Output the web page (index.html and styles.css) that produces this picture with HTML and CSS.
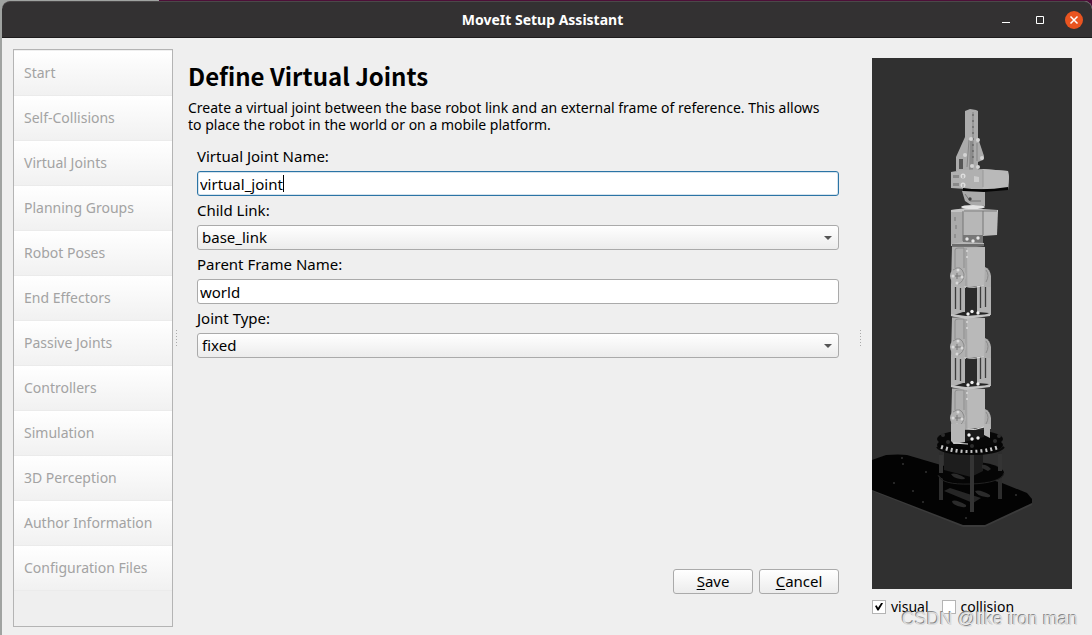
FILE: index.html
```
<!DOCTYPE html>
<html lang="en">
<head>
<meta charset="utf-8">
<title>MoveIt Setup Assistant</title>
<link rel="stylesheet" href="styles.css">
</head>
<body>
<div class="window">
	<header class="titlebar">
		<h1 class="titlebar-text">MoveIt Setup Assistant</h1>
		<div class="titlebar-buttons">
			<button type="button" class="winbtn" aria-label="Minimize">
				<svg width="18" height="18" viewBox="0 0 18 18"><path d="M5 11.5h8" stroke="#fff"/></svg>
			</button>
			<button type="button" class="winbtn" aria-label="Maximize">
				<svg width="18" height="18" viewBox="0 0 18 18"><path d="M5.5 5.5h7v7h-7z" fill="none" stroke="#fff"/></svg>
			</button>
			<button type="button" class="winbtn" aria-label="Close">
				<svg width="18" height="18" viewBox="0 0 18 18"><circle cx="9" cy="9" r="9" fill="#e95420"/><path d="M5.5 5.5l7 7M12.5 5.5l-7 7" stroke="#fff" stroke-width="1.5"/></svg>
			</button>
		</div>
	</header>
	<div class="content">
		<nav class="steps">
			<button type="button" class="step" disabled>Start</button>
			<button type="button" class="step" disabled>Self-Collisions</button>
			<button type="button" class="step" disabled>Virtual Joints</button>
			<button type="button" class="step" disabled>Planning Groups</button>
			<button type="button" class="step" disabled>Robot Poses</button>
			<button type="button" class="step" disabled>End Effectors</button>
			<button type="button" class="step" disabled>Passive Joints</button>
			<button type="button" class="step" disabled>Controllers</button>
			<button type="button" class="step" disabled>Simulation</button>
			<button type="button" class="step" disabled>3D Perception</button>
			<button type="button" class="step" disabled>Author Information</button>
			<button type="button" class="step" disabled>Configuration Files</button>
		</nav>
		<div class="splitter"></div>
		<main class="page">
			<h2 class="page-title">Define Virtual Joints</h2>
			<p class="page-desc">Create a virtual joint between the base robot link and an external frame of reference. This allows to place the robot in the world or on a mobile platform.</p>
			<form class="form">
				<label class="label" for="joint-name">Virtual Joint Name:</label>
				<div class="field field-active">
					<input class="input" id="joint-name" type="text" value="virtual_joint">
				</div>
				<label class="label" for="child-link">Child Link:</label>
				<div class="field field-select">
					<select class="select" id="child-link"><option>base_link</option></select>
				</div>
				<label class="label" for="parent-frame">Parent Frame Name:</label>
				<div class="field">
					<input class="input" id="parent-frame" type="text" value="world">
				</div>
				<label class="label" for="joint-type">Joint Type:</label>
				<div class="field field-select">
					<select class="select" id="joint-type"><option>fixed</option></select>
				</div>
				<div class="actions">
					<button type="button" class="button"><u>S</u>ave</button>
					<button type="button" class="button"><u>C</u>ancel</button>
				</div>
			</form>
		</main>
		<div class="splitter"></div>
		<aside class="viewer">
			<div class="scene">
				<svg class="robot" viewBox="872 58 200 531" role="img" aria-label="Robot model">
					<defs>
						<!-- servo body with hinge, shared by the three arm segments -->
						<g id="servo">
							<path d="M952 246l16-1 17 2v38l-17 2-5-1h-12z" fill="#b0b0b0"/>
							<path d="M967 248l18-1v38l-17 2z" fill="#b9b9b9"/>
							<path d="M966 248v38" stroke="#9a9a9a"/>
							<path d="M955 268v-18q0-2 3-2h6v20" fill="none" stroke="#8c8c8c"/>
							<path d="M952 246h32" stroke="#3a3a3a"/>
							<path d="M985 267q5 2 6 9v11h-7z" fill="#adadad"/>
							<path d="M986 270q4 5 0 12" fill="none" stroke="#8a8a8a"/>
							<circle cx="958" cy="276" r="8" fill="#b2b2b2"/>
							<path d="M953 270q8-6 11 4q0 8-6 10" fill="none" stroke="#8a8a8a"/>
							<path d="M957 273v6M955 276h6" stroke="#777"/>
							<g fill="#dadada"><circle cx="958" cy="270" r="1.5"/><circle cx="953" cy="276" r="1.5"/><circle cx="962" cy="277" r="1.5"/><circle cx="957" cy="283" r="1.5"/><circle cx="967" cy="251" r="1"/><circle cx="967" cy="257" r="1"/></g>
						</g>
						<!-- slotted bracket below a servo -->
						<g id="bracket">
							<path d="M951 284h15v30l-10 3-5-1zM977 286l14-3v32l-14 1z" fill="#b2b2b2"/>
							<path d="M965 288h12v25h-12z" fill="#2b2b2b"/>
							<path d="M955.500 287v22M960.500 288v22M980.500 286v22M985.500 284v23" stroke="#3c3c3c" stroke-width="1.3"/>
							<path d="M964 286q10 3 20 -1" fill="none" stroke="#dedede"/>
							<path d="M963 312h15l11 1-4 2-23 1-8-1z" fill="#242424"/>
							<path d="M951 316l15 3 24-3v-2l-24 2-15-2z" fill="#c4c4c4"/>
							<g fill="#f2f2f2"><circle cx="968" cy="314" r="1.700"/><circle cx="972" cy="311.500" r="1.700"/><circle cx="978" cy="313" r="1.700"/></g>
						</g>
					</defs>
					<!-- base plate -->
					<path d="M872 461l14-6 21 1 121 39 4 5v5l-47 22h-22l-91-36z" fill="#3b3b3b"/>
					<path d="M872 460l14-5q13-1 21 0l95 28 25 10 5 6v4l-47 22h-22l-91-35z" fill="#030303"/>
					<g fill="#333"><circle cx="902" cy="458" r="1"/><circle cx="903" cy="464" r="1"/><circle cx="926" cy="472" r="1"/><circle cx="894" cy="483" r="1"/><circle cx="913" cy="491" r="1"/><circle cx="923" cy="502" r="1"/><circle cx="966" cy="518" r="1"/><circle cx="1016" cy="495" r="1"/></g>
					<path d="M944 491l6-3 31 10-8 5z" fill="#262626"/>
					<path d="M952 501q4-2 14 4 1 3-4 2-10-2-10-6zM975 491q5-2 15 4 1 3-4 2-9-1-11-6z" fill="#2b2b2b"/>
					<!-- deck and posts -->
					<path d="M939 452h4v48h-4zM998 451h4v48h-4z" fill="#2d2d2d"/>
					<ellipse cx="971" cy="473" rx="33" ry="11" fill="#050505"/>
					<path d="M944 452h39v19l-12 6-27-7z" fill="#1d1d1d"/>
					<path d="M951 474q5-2 14 4 0 2-5 1-7-1-9-5zM982 465q4-1 9 4l-3 2-6-3z" fill="#2b2b2b"/>
					<path d="M938 475q3 10 33 9t33-11" fill="none" stroke="#222"/>
					<path d="M970 452h4v60h-4zM939 455h4v18h-4zM998 454h4v17h-4z" fill="#343434"/>
					<!-- bearing -->
					<ellipse cx="970" cy="445" rx="33" ry="9" fill="#050505"/>
					<path d="M941 447q29 10 58 0" fill="none" stroke="#c4c4c4" stroke-width="4" stroke-dasharray="2 3"/>
					<path d="M937 447q5 7 33 7t34-7" fill="none" stroke="#080808" stroke-width="2"/>
					<ellipse cx="970" cy="439" rx="33" ry="9" fill="#070707"/>
					<g fill="#2d2d2d"><circle cx="943" cy="435" r="2"/><circle cx="948" cy="442" r="2"/><circle cx="972" cy="446" r="2"/><circle cx="995" cy="441" r="2"/><circle cx="999" cy="436" r="2"/></g>
					<!-- arm -->
					<use href="#servo" y="142"/>
					<path d="M951 424h14v18l-11 2-3-3zM984 424h6v14l-6-3z" fill="#b5b5b5"/>
					<path d="M965 430h19v7l-19 5z" fill="#1a1a1a"/>
					<path d="M953 443l15 1" stroke="#ddd"/>
					<path d="M965 429q10 2 19-2" fill="none" stroke="#ddd"/>
					<g fill="#f2f2f2"><circle cx="969" cy="435" r="1.700"/><circle cx="972" cy="439" r="1.700"/><circle cx="978" cy="438" r="1.700"/></g>
					<use href="#bracket" y="71"/>
					<use href="#servo" y="71"/>
					<use href="#bracket"/>
					<use href="#servo"/>
					<!-- wrist servo -->
					<path d="M963 235h20v8l-20 1z" fill="#777"/>
					<path d="M951 241l12-2v3l21 1v3h-33z" fill="#b8b8b8"/>
					<path d="M952 245h32" stroke="#222"/>
					<path d="M951 210l12-1v33l-12 2z" fill="#aaa"/>
					<path d="M963 210h20v25h-20z" fill="#b7b7b7"/>
					<path d="M983 210l15 1-1 24-14 1z" fill="#bcbcbc"/>
					<path d="M951 210l15-2 32 2v2h-47z" fill="#c4c4c4"/>
					<path d="M964 211h33M983 211v24M963 211v30M955 217v4M956 225v4M955 234v4" stroke="#777"/>
					<g fill="#e6e6e6"><circle cx="967" cy="239" r="1.700"/><circle cx="973" cy="241" r="1.700"/><circle cx="978" cy="238" r="1.700"/></g>
					<path d="M962 191h23v15l-14-1-6-4z" fill="#aaa"/>
					<path d="M965 194l5 7h11" fill="none" stroke="#777"/>
					<circle cx="970" cy="199" r="1.700" fill="#444"/>
					<ellipse cx="973" cy="207" rx="12" ry="2" fill="#e4e4e4"/>
					<!-- gripper -->
					<path d="M965 111l5-2 6 1 2 1v27l6 18-1 4-5 2v9h-22v-14l9-20z" fill="#ababab"/>
					<path d="M970 138l3 4v28h-4z" fill="#8c8c8c"/>
					<path d="M959 159h4v10h-4z" fill="#555"/>
					<path d="M973 112v52M969 140l-2 27M977 143v18" stroke="#858585"/>
					<path d="M973 114v46" stroke="#555" stroke-dasharray="2 4"/>
					<g fill="#d4d4d4"><circle cx="971" cy="139" r="2"/><circle cx="978" cy="140" r="2"/><circle cx="965" cy="155" r="2"/><circle cx="982" cy="158" r="2"/><circle cx="972" cy="166" r="2"/><circle cx="978" cy="167" r="2"/></g>
					<path d="M951 172l12-2 20-1 25 2 1 6-1 13-42-1-15-1z" fill="#b0b0b0"/>
					<path d="M983 169l25 2 1 6-1 13-25-1z" fill="#b9b9b9"/>
					<path d="M963 188q20 3 45-1v3l-24 2-21-1z" fill="#050505"/>
					<path d="M953 175h6v3h-6zM953 183h6v3h-6z" fill="#8a8a8a"/>
					<path d="M974 176l5 1v5h-5z" fill="#ccc"/>
					<g fill="#dedede"><circle cx="963" cy="176" r="2.500"/><circle cx="963" cy="185" r="2.500"/></g>
					<path d="M963 175v3M963 184v3M983 170v17" stroke="#999"/>
				</svg>
			</div>
			<div class="checks">
				<label class="check"><input type="checkbox" class="checkbox" checked>visual</label>
				<label class="check"><input type="checkbox" class="checkbox">collision</label>
			</div>
		</aside>
	</div>
</div>
<div class="watermark">CSDN @like iron man</div>
</body>
</html>
```
FILE: styles.css
```
* {
	box-sizing: border-box;
}
body {
	margin: 0;
	min-height: 100vh;
	display: flex;
	position: relative;
	padding: 1px 0 0 2px;
	background: linear-gradient(90deg, #a0a3a1 159px, #4d0f38 159px);
	font-family: "Noto Sans", sans-serif;
	font-size: 14px;
	line-height: 17px;
	color: #000;
}
button, input, select {
	font: inherit;
	color: inherit;
}
.window {
	flex: 1;
	display: flex;
	flex-direction: column;
	background: #efefef;
	border-radius: 8px 8px 0 0;
}
.titlebar {
	display: grid;
	grid-template-columns: 1fr auto 1fr;
	align-items: center;
	height: 37px;
	padding-right: 9px;
	background: #333132;
	border-top: 1px solid #4b4849;
	border-bottom: 1px solid #1e1c1d;
	border-radius: 8px 8px 0 0;
	color: #fff;
}
.titlebar-text {
	grid-column: 2;
	margin: 0;
	font-size: 14px;
}
.titlebar-buttons {
	display: flex;
	justify-content: flex-end;
	gap: 16px;
}
.winbtn {
	display: flex;
	padding: 0;
	border: 0;
	background: none;
}
.content {
	flex: 1;
	display: flex;
	padding: 11px 20px 8px 11px;
}
.steps {
	width: 160px;
	padding-top: 1px;
	border: 1px solid #b4b4b4;
}
.step {
	display: block;
	width: 100%;
	height: 45px;
	padding: 0 10px 1px;
	border: 0;
	border-bottom: 1px solid #ebebeb;
	background: linear-gradient(#fff, #f1f1f1);
	color: #a3a3a3;
	text-align: left;
}
.splitter {
	width: 7px;
	display: flex;
	align-items: center;
	justify-content: center;
}
.splitter::before {
	content: "";
	width: 1px;
	height: 17px;
	background: repeating-linear-gradient(#aaa 0 1px, transparent 1px 3px);
}
.page {
	flex: 1;
	display: flex;
	flex-direction: column;
	padding: 9px 14px 33px 8px;
}
.page-title {
	margin: 0;
	font-family: "Noto Sans CJK SC", sans-serif;
	font-size: 24px;
	line-height: 36px;
}
.page-desc {
	margin: 5px 0 0;
	padding-right: 12px;
}
.form {
	flex: 1;
	display: flex;
	flex-direction: column;
	padding: 9px 4px 0 9px;
	font-size: 15px;
}
.label {
	padding: 6px 0;
}
.field {
	position: relative;
	display: flex;
}
.input, .select {
	width: 100%;
	height: 25px;
	border: 1px solid #aaa;
	border-radius: 3px;
	outline: 0;
}
.input {
	padding: 0 2px;
	background: #fff;
}
.field-active .input {
	border-color: #2b74a5;
	box-shadow: inset 0 0 0 1px #d5e3ed;
}
/* text cursor */
.field-active::after {
	content: "";
	position: absolute;
	top: 4px;
	left: 86px;
	height: 17px;
	border-left: 1px solid #000;
}
.select {
	appearance: none;
	padding: 0 4px;
	background: linear-gradient(#fff, #ececec);
}
.field-select::after {
	content: "";
	position: absolute;
	top: 11px;
	right: 7px;
	border: 4px solid transparent;
	border-top-color: #555;
	border-bottom: 0;
	pointer-events: none;
}
.actions {
	display: flex;
	justify-content: flex-end;
	gap: 6px;
	margin-top: auto;
}
.button {
	width: 80px;
	height: 25px;
	padding: 0;
	border: 1px solid #aaa;
	border-radius: 3px;
	background: linear-gradient(#fff, #ececec);
}
.button u {
	text-underline-offset: 2px;
}
.viewer {
	width: 208px;
	display: flex;
	flex-direction: column;
	padding: 9px 0 12px 8px;
}
.scene {
	flex: 1;
	min-height: 0;
	display: flex;
	background: #303030;
}
.robot {
	width: 100%;
	height: 100%;
}
.checks {
	display: flex;
	gap: 13px;
	padding-top: 9px;
	font-size: 14px;
}
.check {
	display: flex;
	align-items: center;
	gap: 5px;
}
.checkbox {
	appearance: none;
	width: 14px;
	height: 14px;
	margin: 0;
	border: 1px solid #b4b4b4;
	background: #fff;
}
.checkbox:checked::before {
	content: "";
	display: block;
	width: 8px;
	height: 8px;
	margin: 2px;
	background: #000;
	clip-path: polygon(0 45%, 20% 35%, 38% 65%, 80% 0, 100% 10%, 45% 100%, 30% 100%);
}
.watermark {
	position: absolute;
	right: 14px;
	bottom: 5px;
	font-family: "Liberation Sans", sans-serif;
	font-size: 18px;
	line-height: 22px;
	color: #dcdcdc;
	text-shadow: -1px -1px 0 #888;
	pointer-events: none;
}
```
